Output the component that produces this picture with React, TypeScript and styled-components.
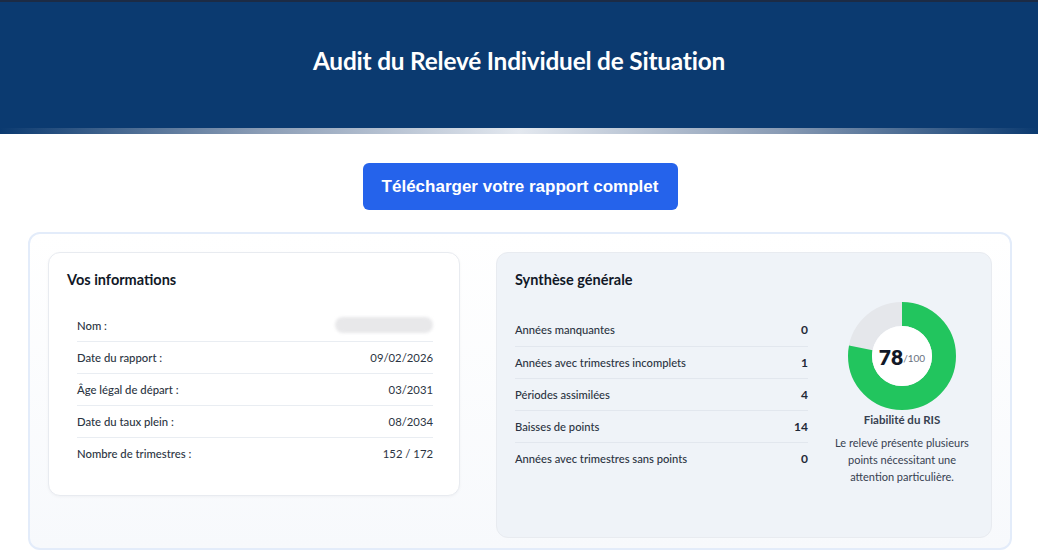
import styled, { createGlobalStyle } from 'styled-components';

const GlobalStyle = createGlobalStyle`
  body {
    margin: 0;
    background: #ffffff;
    font-family: Lato, "Open Sans", sans-serif;
    color: #1f2937;
  }
  * { box-sizing: border-box; }
`;

const infos = [
  { label: 'Nom :', value: null },
  { label: 'Date du rapport :', value: '09/02/2026' },
  { label: 'Âge légal de départ :', value: '03/2031' },
  { label: 'Date du taux plein :', value: '08/2034' },
  { label: 'Nombre de trimestres :', value: '152 / 172' },
];

const stats = [
  { label: 'Années manquantes', value: '0' },
  { label: 'Années avec trimestres incomplets', value: '1' },
  { label: 'Périodes assimilées', value: '4' },
  { label: 'Baisses de points', value: '14' },
  { label: 'Années avec trimestres sans points', value: '0' },
];

const score = 78;

const Donut = ({ value }: { value: number }) => {
  const r = 42;
  const c = 2 * Math.PI * r;
  return (
    <DonutWrap>
      <svg width="108" height="108" viewBox="0 0 108 108">
        <circle cx="54" cy="54" r={r} fill="none" stroke="#e5e7eb" strokeWidth="24" />
        <circle
          cx="54"
          cy="54"
          r={r}
          fill="none"
          stroke="#22c55e"
          strokeWidth="24"
          strokeDasharray={`${(c * value) / 100} ${c}`}
          transform="rotate(-90 54 54)"
        />
        <circle cx="54" cy="54" r="30" fill="#ffffff" />
      </svg>
      <ScoreText>
        <ScoreValue>{value}</ScoreValue>
        <ScoreMax>/100</ScoreMax>
      </ScoreText>
    </DonutWrap>
  );
};

const App = () => {
  return (
    <>
      <GlobalStyle />
      <Header>
        <Title>Audit du Relevé Individuel de Situation</Title>
      </Header>
      <Main>
        <DownloadButton>Télécharger votre rapport complet</DownloadButton>
        <Panel>
          <InfoCard>
            <CardTitle>Vos informations</CardTitle>
            <InfoList>
              {infos.map((row) => (
                <InfoRow key={row.label}>
                  <Label>{row.label}</Label>
                  {row.value ? <Value>{row.value}</Value> : <Blurred />}
                </InfoRow>
              ))}
            </InfoList>
          </InfoCard>
          <SummaryCard>
            <CardTitle>Synthèse générale</CardTitle>
            <SummaryBody>
              <StatList>
                {stats.map((row) => (
                  <StatRow key={row.label}>
                    <Label>{row.label}</Label>
                    <StatValue>{row.value}</StatValue>
                  </StatRow>
                ))}
              </StatList>
              <ScoreColumn>
                <Donut value={score} />
                <ScoreTitle>Fiabilité du RIS</ScoreTitle>
                <ScoreDesc>
                  Le relevé présente plusieurs points nécessitant une attention particulière.
                </ScoreDesc>
              </ScoreColumn>
            </SummaryBody>
          </SummaryCard>
        </Panel>
      </Main>
    </>
  );
};

const Header = styled.header`
  height: 134px;
  background: #0b3a70;
  border-top: 2px solid #1c2b45;
  display: flex;
  align-items: center;
  justify-content: center;
  padding-bottom: 16px;
  position: relative;
  &::after {
    content: '';
    position: absolute;
    left: 0;
    right: 0;
    bottom: 0;
    height: 6px;
    background: linear-gradient(90deg, #0b3a70 0%, #8a9cb5 25%, #e3e8ef 50%, #8a9cb5 75%, #0b3a70 100%);
  }
`;

const Title = styled.h1`
  margin: 0;
  color: #ffffff;
  font-size: 24.4px;
  font-weight: 700;
  letter-spacing: -0.2px;
`;

const Main = styled.main`
  display: flex;
  flex-direction: column;
  align-items: center;
  padding: 29px 26px 0 28px;
`;

const DownloadButton = styled.button`
  width: 315px;
  height: 47px;
  border: none;
  border-radius: 6px;
  background: #2563eb;
  color: #ffffff;
  font-family: "Liberation Sans", Arial, sans-serif;
  font-size: 17px;
  font-weight: 700;
  cursor: pointer;
`;

const Panel = styled.section`
  width: 984px;
  margin-top: 22px;
  display: flex;
  align-items: flex-start;
  gap: 36px;
  padding: 18px 18px 10px;
  border: 2px solid #e3ecfa;
  border-radius: 12px;
  background: linear-gradient(180deg, #ffffff 0%, #f7f9fc 100%);
`;

const Card = styled.div`
  border-radius: 12px;
  border: 1px solid #e8ebf0;
  padding: 17px 18px;
`;

const InfoCard = styled(Card)`
  width: 412px;
  background: #ffffff;
  padding-bottom: 26px;
  box-shadow: 0 1px 3px rgba(15, 23, 42, 0.04);
`;

const SummaryCard = styled(Card)`
  flex: 1;
  background: #eff3f8;
  padding-bottom: 52px;
`;

const CardTitle = styled.h2`
  margin: 0;
  font-size: 14.5px;
  line-height: 20px;
  font-weight: 700;
  color: #111827;
`;

const InfoList = styled.div`
  margin-top: 19px;
  padding: 0 8px 0 10px;
`;

const Row = styled.div`
  display: flex;
  justify-content: space-between;
  align-items: center;
  height: 32px;
  font-size: 11.3px;
  & + & {
    border-top: 1px solid #e9edf2;
  }
`;

const InfoRow = styled(Row)``;

const Label = styled.span`
  color: #2b3442;
  font-weight: 500;
`;

const Value = styled.span`
  color: #2b3442;
`;

const Blurred = styled.span`
  width: 98px;
  height: 16px;
  border-radius: 8px;
  background: #e8e8ea;
  filter: blur(1.5px);
`;

const SummaryBody = styled.div`
  display: flex;
  align-items: center;
  gap: 23px;
  margin-top: 12px;
`;

const StatList = styled.div`
  flex: 1;
`;

const StatRow = styled(Row)`
  font-size: 11.2px;
  & + & {
    border-top: 1px solid #e2e7ee;
  }
`;

const StatValue = styled.span`
  color: #1f2937;
  font-weight: 700;
  font-size: 12px;
`;

const ScoreColumn = styled.div`
  width: 142px;
  display: flex;
  flex-direction: column;
  align-items: center;
  text-align: center;
`;

const DonutWrap = styled.div`
  position: relative;
  width: 108px;
  height: 108px;
  svg {
    display: block;
  }
`;

const ScoreText = styled.div`
  position: absolute;
  inset: 0;
  display: flex;
  align-items: center;
  justify-content: center;
`;

const ScoreValue = styled.span`
  font-size: 21px;
  font-weight: 800;
  color: #111827;
`;

const ScoreMax = styled.span`
  font-size: 10px;
  color: #6b7280;
  margin-top: 3px;
`;

const ScoreTitle = styled.div`
  margin-top: 3px;
  font-size: 11.5px;
  font-weight: 700;
  color: #374151;
`;

const ScoreDesc = styled.p`
  margin: 8px 0 0;
  font-size: 11px;
  line-height: 17px;
  color: #374151;
`;

export default App;
